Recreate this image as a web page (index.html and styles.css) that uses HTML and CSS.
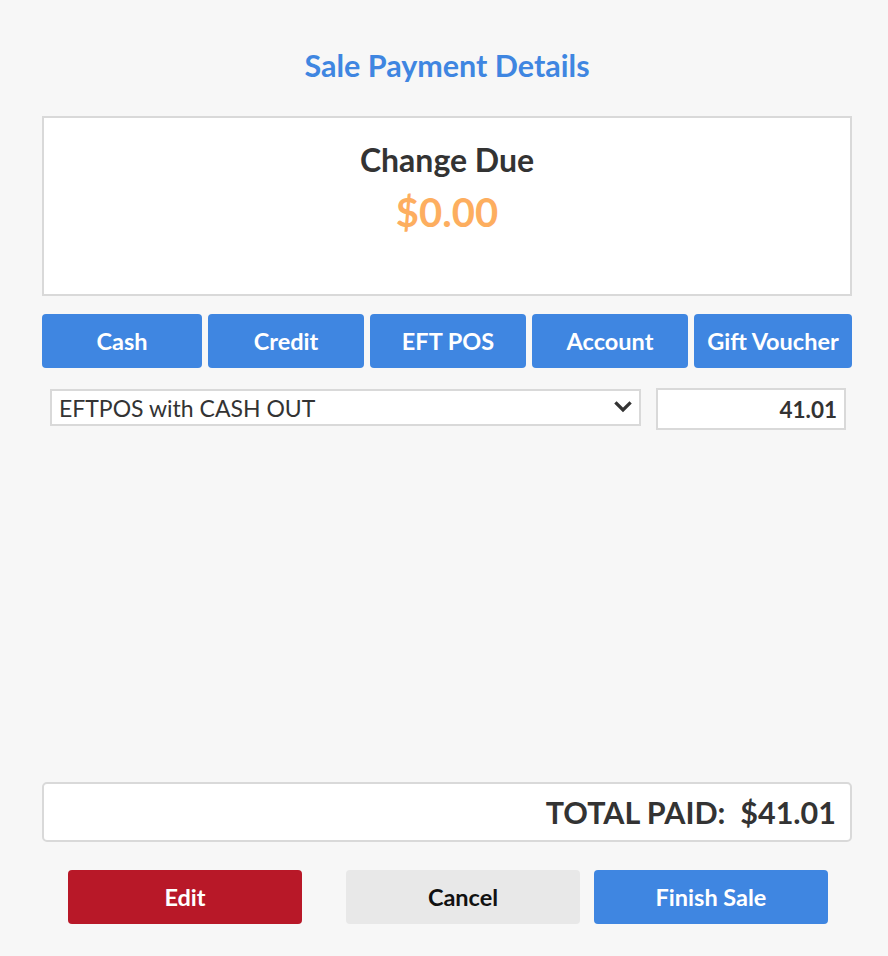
FILE: index.html
```html
<!DOCTYPE html>
<html lang="en">
<head>
  <meta charset="UTF-8">
  <meta name="viewport" content="width=device-width, initial-scale=1.0">
  <title>Sale Payment Details</title>
  <link rel="stylesheet" href="styles.css">
</head>
<body>

  <div class="page">
    <h1 class="title">Sale Payment Details</h1>

    <!-- change due summary -->
    <div class="change-box">
      <div class="change-label">Change Due</div>
      <div class="change-amount">$0.00</div>
    </div>

    <div class="methods">
      <button class="method">Cash</button>
      <button class="method">Credit</button>
      <button class="method">EFT POS</button>
      <button class="method">Account</button>
      <button class="method">Gift Voucher</button>
    </div>

    <div class="payment-row">
      <div class="select-wrap">
        <select class="pay-type">
          <option>EFTPOS with CASH OUT</option>
          <option>EFTPOS</option>
        </select>
        <svg class="chevron" width="18" height="12" viewBox="0 0 18 12">
          <path d="M2.5 2.5 L9 9 L15.5 2.5" fill="none" stroke="#333" stroke-width="3.2" stroke-linecap="square"/>
        </svg>
      </div>
      <input class="pay-amount" type="text" value="41.01">
    </div>

    <div class="total-box">TOTAL PAID:&nbsp;&nbsp;$41.01</div>

    <div class="actions">
      <button class="action edit">Edit</button>
      <button class="action cancel">Cancel</button>
      <button class="action finish">Finish Sale</button>
    </div>
  </div>

</body>
</html>
```

FILE: styles.css
```css
body {
  font-family: Lato, "Open Sans", sans-serif;
  margin: 0;
  padding: 0;
  background-color: #f7f7f7;
  color: #333;
}

.page {
  width: 810px;
  padding: 47px 0 0 42px;
}

.title {
  margin: 0 0 33px;
  font-size: 30.5px;
  line-height: 36px;
  font-weight: 700;
  color: #3f86e1;
  text-align: center;
}

.change-box {
  box-sizing: border-box;
  height: 180px;
  padding-top: 23px;
  background-color: #fff;
  border: 2px solid #d9d9d9;
  text-align: center;
}

.change-label {
  font-size: 32px;
  line-height: 38px;
  font-weight: 700;
  color: #333;
}

.change-amount {
  margin-top: 9px;
  font-size: 40px;
  line-height: 48px;
  font-weight: 700;
  color: #fdae5f;
}

.methods {
  display: grid;
  grid-template-columns: 160px 156px 156px 156px 1fr;
  gap: 6px;
  margin-top: 18px;
}

.method {
  height: 54px;
  padding: 0;
  border: none;
  border-radius: 4px;
  background-color: #3f86e1;
  color: #fff;
  font-family: inherit;
  font-size: 23.5px;
  font-weight: 700;
  cursor: pointer;
}

.payment-row {
  display: flex;
  align-items: flex-start;
  gap: 15px;
  margin-top: 20px;
  padding-left: 8px;
}

.select-wrap {
  position: relative;
  width: 591px;
  margin-top: 1px;
}

.pay-type {
  box-sizing: border-box;
  width: 100%;
  height: 37px;
  padding: 0 0 0 7px;
  border: 2px solid #d9d9d9;
  border-radius: 0;
  background-color: #fff;
  color: #333;
  font-family: inherit;
  font-size: 23px;
  appearance: none;
  -webkit-appearance: none;
}

.chevron {
  position: absolute;
  right: 9px;
  top: 12px;
  pointer-events: none;
}

.pay-amount {
  box-sizing: border-box;
  width: 190px;
  height: 42px;
  padding: 0 7px 0 0;
  border: 2px solid #d9d9d9;
  background-color: #fff;
  color: #333;
  font-family: inherit;
  font-size: 22.5px;
  font-weight: 700;
  text-align: right;
}

.total-box {
  box-sizing: border-box;
  height: 60px;
  margin-top: 352px;
  padding-right: 14px;
  border: 2px solid #d9d9d9;
  border-radius: 5px;
  background-color: #fff;
  font-size: 30.5px;
  line-height: 56px;
  font-weight: 700;
  text-align: right;
  color: #333;
}

.actions {
  display: flex;
  margin-top: 28px;
  padding-left: 26px;
}

.action {
  width: 234px;
  height: 54px;
  border: none;
  border-radius: 4px;
  font-family: inherit;
  font-size: 23.5px;
  font-weight: 700;
  cursor: pointer;
}

.edit {
  margin-right: 44px;
  background-color: #b81828;
  color: #fff;
}

.cancel {
  margin-right: 14px;
  background-color: #e8e8e8;
  color: #111;
}

.finish {
  background-color: #3f86e1;
  color: #fff;
}
```
